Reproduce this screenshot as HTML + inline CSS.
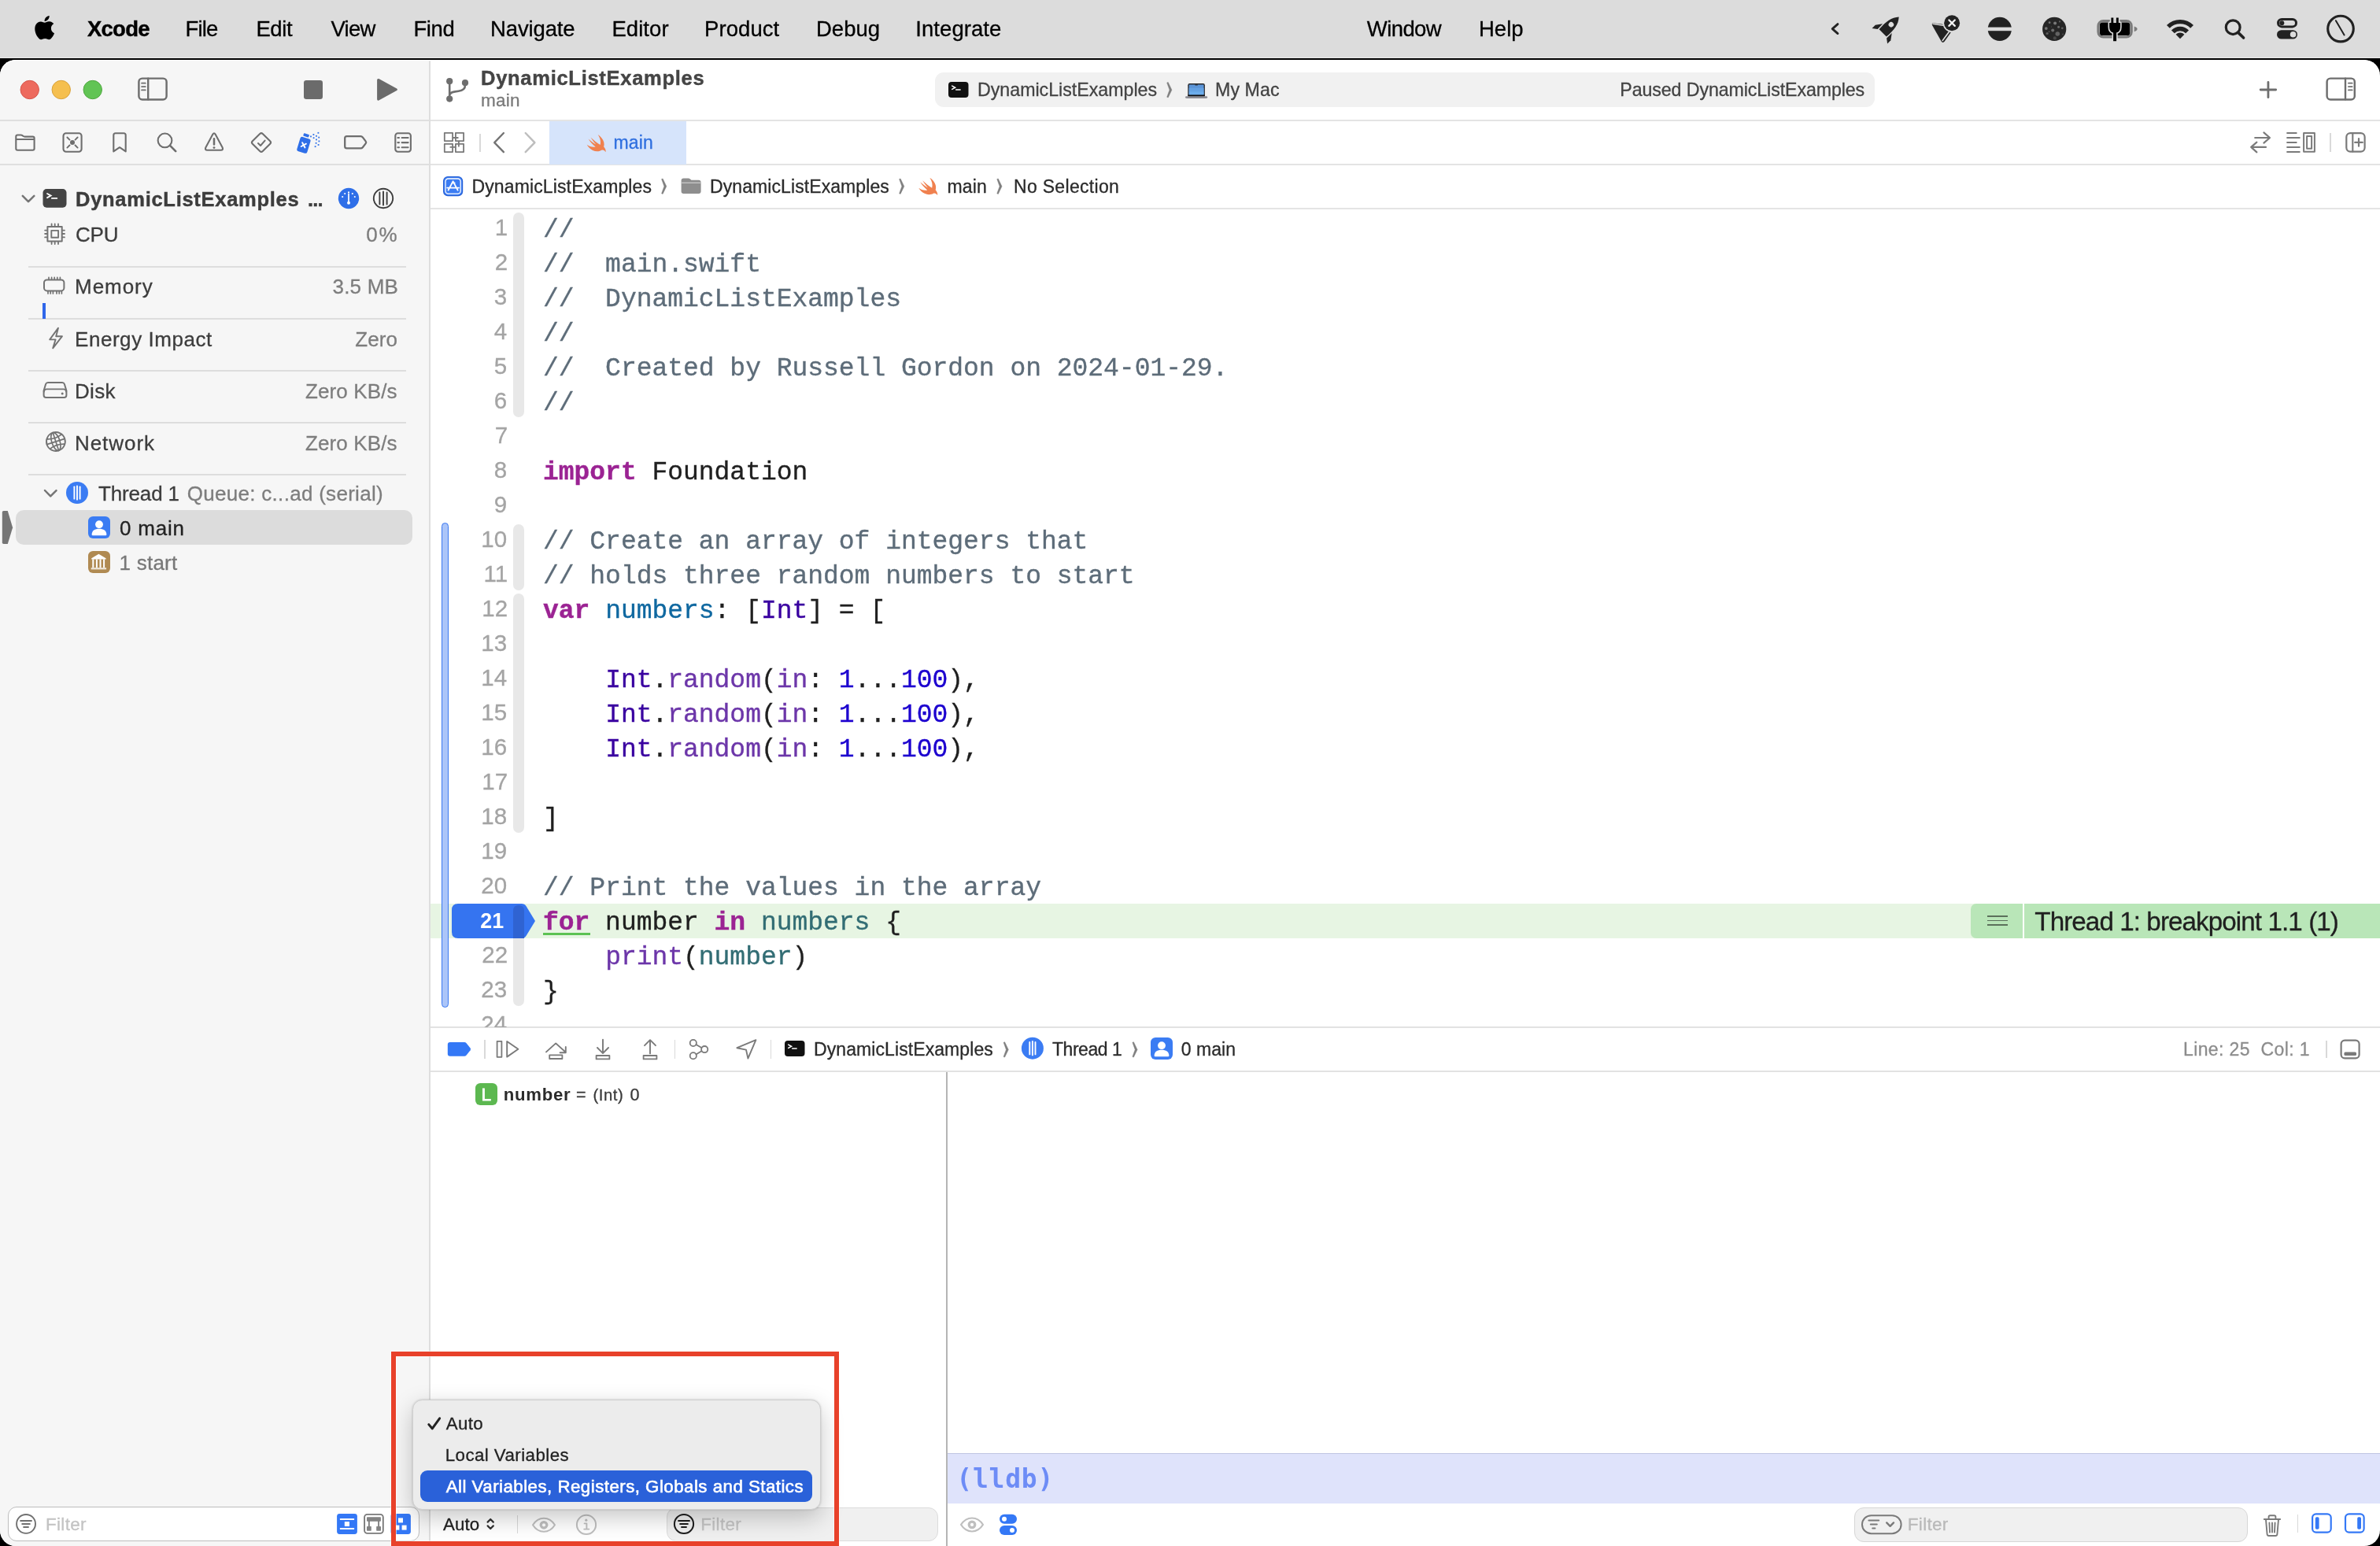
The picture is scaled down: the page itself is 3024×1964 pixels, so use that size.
<!DOCTYPE html><html lang="en"><head><meta charset="utf-8"><title>Xcode - DynamicListExamples</title><style>

*{margin:0;padding:0;box-sizing:border-box}
html,body{width:3024px;height:1964px;overflow:hidden;background:#000}
body{position:relative;font-family:"Liberation Sans",sans-serif}
.t{position:absolute;white-space:pre;line-height:1;font-family:"Liberation Sans",sans-serif;-webkit-text-stroke:.3px}
.t.mono{font-family:"Liberation Mono",monospace}
.t.dv{font-family:"DejaVu Sans Mono",monospace}
.c{color:#5d6c79}.k{color:#9b2393;font-weight:700}.p{color:#1f1f1f}.d{color:#0f68a0}
.ty{color:#3900a0}
.f{color:#6c36a9}.n{color:#1c00cf}.v{color:#326d74}
#win{position:absolute;left:0;top:76px;width:3024px;height:1888px;border-radius:20px;background:#fff;overflow:hidden}
.hl{position:absolute;height:1.5px;background:#e1e1e1}
svg{overflow:visible}
#txt,#code,#poptxt{will-change:transform}
.t.lb{-webkit-text-stroke:.8px}
.t.bd{-webkit-text-stroke:.45px}
.t.hv{-webkit-text-stroke:.6px}

.cl{position:absolute;left:690.0px;white-space:pre;font:33px/37px "Liberation Mono",monospace;letter-spacing:-0.023px;color:#000;-webkit-text-stroke:.35px}
</style></head><body>
<div style="position:absolute;left:0px;top:0px;width:3024px;height:73px;background:#dcdcdc;"></div>
<div style="position:absolute;left:0px;top:73px;width:3024px;height:1.2px;background:#ececec;"></div>
<svg style="position:absolute;left:40.7px;top:19.7px;" width="31.3" height="30.3" viewBox="0 0 24 24"><path d="M12.152 6.896c-.948 0-2.415-1.078-3.96-1.04-2.04.027-3.91 1.183-4.961 3.014-2.117 3.675-.546 9.103 1.519 12.09 1.013 1.454 2.208 3.09 3.792 3.039 1.52-.065 2.09-.987 3.935-.987 1.831 0 2.35.987 3.96.948 1.637-.026 2.676-1.48 3.676-2.948 1.156-1.688 1.636-3.325 1.662-3.415-.039-.013-3.182-1.221-3.22-4.857-.026-3.04 2.48-4.494 2.597-4.559-1.429-2.09-3.623-2.324-4.39-2.376-2-.156-3.675 1.09-4.61 1.09zM15.53 3.83c.843-1.012 1.4-2.427 1.245-3.83-1.207.052-2.662.805-3.532 1.818-.78.896-1.454 2.338-1.273 3.714 1.338.104 2.715-.688 3.559-1.701" fill="#000"/></svg>
<svg style="position:absolute;left:2320px;top:20px;" width="24" height="34" viewBox="0 0 24 34"><path d="M15 10.6L8.2 16.6L15 22.6" fill="none" stroke="#222" stroke-width="2.8" stroke-linecap="round" stroke-linejoin="round"/></svg>
<svg style="position:absolute;left:0;top:0" width="3024" height="74" viewBox="0 0 3024 74"><g transform="translate(2397.5 36.6) rotate(45)"><path d="M0 -21.5C6.2 -14.5 7.6 -6 6.6 7.5H-6.6C-7.6 -6 -6.2 -14.5 0 -21.5Z" fill="#222"/><circle cx="0" cy="-7.6" r="3.3" fill="#dcdcdc"/><path d="M-8.3 -0.6L-13.8 7V13L-8.1 8.6Z" fill="#222"/><path d="M8.3 -0.6L13.8 7V13L8.1 8.6Z" fill="#222"/></g><path d="M2455.6 29.3Q2454.2 30.4 2455 32L2466.6 52.6Q2468.4 55.2 2470.6 52.8L2478.6 41.6L2468 30.8Z" fill="#222"/><path d="M2456 30.2L2468.6 32.3" stroke="#dcdcdc" stroke-width="1.6" stroke-linecap="round" fill="none"/><path d="M2468.2 51.6L2476.6 40.2" stroke="#dcdcdc" stroke-width="1.7" stroke-linecap="round" fill="none"/><circle cx="2480.1" cy="29.2" r="11.6" fill="#dcdcdc"/><circle cx="2480.1" cy="29.2" r="10" fill="#222"/><path d="M2476.4 25.5l7.4 7.4m0-7.4l-7.4 7.4" stroke="#f2f2f2" stroke-width="2.3" stroke-linecap="round"/><circle cx="2540.8" cy="36.9" r="15.1" fill="#222"/><rect x="2524" y="34.6" width="34" height="4.6" fill="#dcdcdc"/><circle cx="2610.2" cy="36.9" r="15.1" fill="#262626"/><circle cx="2604.1" cy="28.7" r="1.4" fill="#8a8a8a" opacity="0.8"/><circle cx="2611.1" cy="29.5" r="2.0" fill="#8a8a8a" opacity="0.85"/><circle cx="2617.1" cy="27.4" r="1.1" fill="#8a8a8a" opacity="0.6"/><circle cx="2599.8" cy="36.1" r="1.9" fill="#8a8a8a" opacity="0.8"/><circle cx="2615.6" cy="34.2" r="1.5" fill="#8a8a8a" opacity="0.7"/><circle cx="2620.3" cy="35.8" r="1.4" fill="#8a8a8a" opacity="0.6"/><circle cx="2608.2" cy="38.4" r="2.0" fill="#8a8a8a" opacity="0.7"/><circle cx="2614.3" cy="43.0" r="2.8" fill="#8a8a8a" opacity="0.6"/><circle cx="2601.1" cy="42.5" r="1.6" fill="#8a8a8a" opacity="0.55"/><circle cx="2603.6" cy="40.3" r="0.8" fill="#8a8a8a" opacity="0.6"/><circle cx="2610.8" cy="48.4" r="2.1" fill="#8a8a8a" opacity="0.35"/><circle cx="2621.1" cy="43.4" r="1.0" fill="#8a8a8a" opacity="0.4"/><circle cx="2606.4" cy="34.0" r="0.6" fill="#8a8a8a" opacity="0.5"/><rect x="2665.9" y="26.4" width="42.4" height="20.6" rx="6.5" fill="none" stroke="#7b7b7b" stroke-width="3"/><rect x="2667.9" y="28.4" width="38.4" height="16.6" rx="3.6" fill="#000"/><path d="M2711.7 33.4Q2715.6 34.6 2715.6 36.8Q2715.6 39 2711.7 40.2Z" fill="#7b7b7b"/><g stroke="#dcdcdc" stroke-width="3.2" stroke-linejoin="round"><path id="plg" d="M2682.4 22.6h2.9v6.4h3.6v-6.4h2.9v6.4h2.3v5.2q0 6-5 7.4v10.6h-4v-10.6q-5-1.4-5-7.4v-5.2h2.3Z" fill="#dcdcdc"/></g><path d="M2682.4 22.6h2.9v6.4h3.6v-6.4h2.9v6.4h2.3v5.2q0 6-5 7.4v10.6h-4v-10.6q-5-1.4-5-7.4v-5.2h2.3Z" fill="#000"/><g fill="none" stroke="#222" stroke-width="5.4"><path d="M2754.9 33.9A21.3 21.3 0 0 1 2785.1 33.9"/><path d="M2760.9 40.4A12.6 12.6 0 0 1 2779.1 40.4"/></g><path d="M2770 49.2L2764.6 43.8A7.6 7.6 0 0 1 2775.4 43.8Z" fill="#222"/><circle cx="2837.2" cy="34.7" r="8.9" fill="none" stroke="#222" stroke-width="3.2"/><path d="M2843.8 41.4L2850.6 48" stroke="#222" stroke-width="3.6" stroke-linecap="round"/><rect x="2894.5" y="24.5" width="23" height="9.4" rx="4.7" fill="none" stroke="#222" stroke-width="3"/><circle cx="2899.3" cy="29.2" r="3" fill="#222"/><rect x="2893" y="38.2" width="26" height="11.4" rx="5.7" fill="#222"/><circle cx="2913.6" cy="43.8" r="3.8" fill="#dcdcdc"/><circle cx="2974" cy="36.6" r="16.3" fill="none" stroke="#222" stroke-width="3.1"/><path d="M2967.9 26.2L2978.6 44.4" stroke="#222" stroke-width="2" stroke-linecap="round"/></svg>
<div id="win"><div style="position:absolute;left:0;top:-76px;width:3024px;height:1964px"><div style="position:absolute;left:0px;top:75.5px;width:545.5px;height:1890px;background:#f6f6f6;"></div>
<div style="position:absolute;left:545px;top:75.5px;width:1.5px;height:1890px;background:#dedede;"></div>
<div style="position:absolute;left:0px;top:152px;width:545px;height:2px;background:#dfdfdf;"></div>
<div style="position:absolute;left:0px;top:208px;width:545px;height:2px;background:#dfdfdf;"></div>
<div style="position:absolute;left:546.5px;top:152px;width:2478px;height:2px;background:#e4e4e4;"></div>
<div style="position:absolute;left:546.5px;top:208px;width:2478px;height:2px;background:#e4e4e4;"></div>
<div style="position:absolute;left:546.5px;top:264px;width:2478px;height:2px;background:#e4e4e4;"></div>
<div style="position:absolute;left:36px;top:338.25px;width:480px;height:2px;background:#dddddd;"></div>
<div style="position:absolute;left:36px;top:404.25px;width:480px;height:2px;background:#dddddd;"></div>
<div style="position:absolute;left:36px;top:470.25px;width:480px;height:2px;background:#dddddd;"></div>
<div style="position:absolute;left:36px;top:536.25px;width:480px;height:2px;background:#dddddd;"></div>
<div style="position:absolute;left:36px;top:602.25px;width:480px;height:2px;background:#dddddd;"></div>
<div style="position:absolute;left:54px;top:384.5px;width:4px;height:20px;background:#2f66ea;"></div>
<div style="position:absolute;left:20px;top:648px;width:504px;height:43.5px;background:#dcdcdc;border-radius:10px"></div>
<div style="position:absolute;left:698px;top:154px;width:174px;height:54.5px;background:#d6e4fb;"></div>
<div style="position:absolute;left:1188px;top:92px;width:1194px;height:44px;background:#f1f1f1;border-radius:11px"></div>
<div style="position:absolute;left:546.5px;top:1148px;width:2478px;height:44px;background:#e7f5e3;"></div>
<div style="position:absolute;left:652px;top:270px;width:14px;height:260px;background:#e8e8e8;border-radius:7px"></div>
<div style="position:absolute;left:652px;top:666px;width:14px;height:84px;background:#e8e8e8;border-radius:7px"></div>
<div style="position:absolute;left:652px;top:754px;width:14px;height:304px;background:#e8e8e8;border-radius:7px"></div>
<div style="position:absolute;left:652px;top:1150px;width:14px;height:128px;background:#e8e8e8;border-radius:7px"></div>
<div style="position:absolute;left:560.5px;top:664px;width:9.5px;height:615.5px;background:#abc5f9;border-radius:5px;border:1.5px solid #3b78f0"></div>
<svg style="position:absolute;left:574px;top:1148px;" width="108" height="44" viewBox="0 0 108 44"><path d="M8 0H88.5Q92.5 0 94.6 3.2L106 22L94.6 40.8Q92.5 44 88.5 44H8Q0 44 0 36V8Q0 0 8 0Z" fill="#3574f0"/><path d="M78 9Q78 2 85 2Q92 2 92 9V44H78Z" fill="#2f63d2"/></svg>
<div style="position:absolute;left:690px;top:1184.5px;width:60px;height:3.5px;background:#5cc253;"></div>
<div style="position:absolute;left:2504px;top:1148px;width:520px;height:44px;background:#b9e6b8;border-radius:7px 0 0 7px"></div>
<div style="position:absolute;left:2569.7px;top:1148px;width:2.5px;height:44px;background:#fff;"></div>
<div style="position:absolute;left:2525px;top:1163px;width:26px;height:1.6px;background:#5b705b;"></div>
<div style="position:absolute;left:2525px;top:1168.6px;width:26px;height:1.6px;background:#5b705b;"></div>
<div style="position:absolute;left:2525px;top:1174.2px;width:26px;height:1.6px;background:#5b705b;"></div>
<div style="position:absolute;left:546.5px;top:1304px;width:2478px;height:2px;background:#e2e2e2;"></div>
<div style="position:absolute;left:546.5px;top:1360.2px;width:2478px;height:2px;background:#e2e2e2;"></div>
<div style="position:absolute;left:1202px;top:1362px;width:2px;height:602px;background:#b5b5b5;"></div>
<div style="position:absolute;left:1204px;top:1846px;width:1820px;height:64px;background:#dfe3fb;border-top:1.5px solid #c0c6e2"></div>
<div style="position:absolute;left:10px;top:1914px;width:523px;height:43.5px;background:#fff;border-radius:11px;border:1.5px solid #bdbdbd"></div>
<div style="position:absolute;left:846.5px;top:1915px;width:345px;height:42.5px;background:#f0f0f0;border-radius:12px;border:1.5px solid #dcdcdc"></div>
<div style="position:absolute;left:2356px;top:1915px;width:500px;height:43.5px;background:#f0f0f0;border-radius:12px;border:1.5px solid #d6d6d6"></div>
<div style="position:absolute;left:609px;top:169.5px;width:1.5px;height:23px;background:#d9d9d9;"></div>
<div style="position:absolute;left:615px;top:1321px;width:1.5px;height:23.5px;background:#d9d9d9;"></div>
<div style="position:absolute;left:856.5px;top:1321px;width:1.5px;height:23.5px;background:#d9d9d9;"></div>
<div style="position:absolute;left:978.5px;top:1321px;width:1.5px;height:23.5px;background:#d9d9d9;"></div>
<div style="position:absolute;left:2955px;top:1322px;width:1.5px;height:22px;background:#d9d9d9;"></div>
<div style="position:absolute;left:2960.3px;top:169.3px;width:1.5px;height:23.6px;background:#d9d9d9;"></div>
<div style="position:absolute;left:656.5px;top:1925px;width:1.5px;height:23px;background:#d9d9d9;"></div>
<div style="position:absolute;left:2918.5px;top:1924px;width:1.5px;height:23px;background:#d9d9d9;"></div>
<svg style="position:absolute;left:0;top:0" width="3024" height="1964" viewBox="0 0 3024 1964"><circle cx="37.75" cy="114" r="11.7" fill="#ed6a5e" stroke="#d6544a" stroke-width="1"/><circle cx="77.75" cy="114" r="11.7" fill="#f5bf4f" stroke="#d9a23c" stroke-width="1"/><circle cx="117.75" cy="114" r="11.7" fill="#61c454" stroke="#4fa73f" stroke-width="1"/><rect x="176.4" y="99.6" width="35.2" height="26.9" rx="4.4" fill="none" stroke="#6e6e6e" stroke-width="2.45" stroke-linecap="round" stroke-linejoin="round" /><path d="M188.2 99.8V126.3" fill="none" stroke="#6e6e6e" stroke-width="2.4" stroke-linecap="round" stroke-linejoin="round" /><path d="M180 105.7h4.8M180 110.1h4.8M180 114.4h4.8" fill="none" stroke="#6e6e6e" stroke-width="1.7" stroke-linecap="round" stroke-linejoin="round" /><rect x="386" y="102" width="24" height="24" rx="3.2" fill="#6b6b6b"/><path d="M480.6 101.4L503.4 113.75L480.6 126.1Z" fill="#6b6b6b" stroke="#6b6b6b" stroke-width="3" stroke-linejoin="round"/><circle cx="571.2" cy="103.2" r="4.1" fill="#6e6e6e"/><circle cx="591" cy="105.2" r="4.1" fill="#6e6e6e"/><circle cx="571.2" cy="125.6" r="4.1" fill="#6e6e6e"/><path d="M571.2 103V125.5M591 105.5V108.2Q591 114.6 582.6 115.8L577 116.6Q571.6 117.6 571.2 121" fill="none" stroke="#6e6e6e" stroke-width="2.6" stroke-linecap="round" stroke-linejoin="round" /><g transform="translate(1205 104) scale(1.0000 1.0000)"><rect width="25.5" height="20" rx="4" fill="#111"/><path d="M4.7 5.1L8.6 7.25L4.7 9.4" fill="none" stroke="#fff" stroke-width="1.55" stroke-linejoin="miter" stroke-linecap="round"/><path d="M9.7 10h5.4" stroke="#fff" stroke-width="1.6" stroke-linecap="round"/></g><path d="M1482.7 105.10L1484.20 104.5L1488.90 114.20L1484.20 123.90L1482.7 123.30L1486.00 114.20Z" fill="#7f7f7f" stroke="#7f7f7f" stroke-width=".5" stroke-linejoin="round"/><rect x="1509.3" y="106" width="21.6" height="16.8" rx="2.2" fill="#2a2a2d"/><rect x="1510.7" y="107.5" width="18.8" height="13" rx=".5" fill="#5c95d8"/><rect x="1510.7" y="111.8" width="18.8" height="4.4" fill="#64a2e3"/><rect x="1510.7" y="116.2" width="18.8" height="4.3" fill="#6cadec"/><rect x="1518.2" y="107.2" width="3.8" height="1.2" rx=".6" fill="#2a2a2d"/><rect x="1509.3" y="120.6" width="21.6" height="2" fill="#0e0e10"/><path d="M1507.4 122.3H1532.8Q1534.2 122.3 1534.2 123.4Q1534.2 125 1532 125H1508.2Q1506 125 1506 123.4Q1506 122.3 1507.4 122.3Z" fill="#8d8d94"/><path d="M2872.2 114h19.5M2881.95 104.3v19.4" fill="none" stroke="#6e6e6e" stroke-width="2.8" stroke-linecap="round" stroke-linejoin="round" /><rect x="2956.6" y="99.6" width="35.2" height="26.9" rx="4.4" fill="none" stroke="#6e6e6e" stroke-width="2.45" stroke-linecap="round" stroke-linejoin="round" /><path d="M2980 99.8V126.3" fill="none" stroke="#6e6e6e" stroke-width="2.4" stroke-linecap="round" stroke-linejoin="round" /><path d="M2983.9 105.7h4.8M2983.9 110.1h4.8M2983.9 114.4h4.8" fill="none" stroke="#6e6e6e" stroke-width="1.7" stroke-linecap="round" stroke-linejoin="round" /><path d="M20.3 174.6V173.5Q20.3 171.5 22.3 171.5H26.6Q27.6 171.5 28.4 172.1L29.6 173Q30.4 173.6 31.4 173.6H41.6Q43.6 173.6 43.6 175.6V188.7Q43.6 190.7 41.6 190.7H22.3Q20.3 190.7 20.3 188.7ZM20.3 177H43.6" fill="none" stroke="#6e6e6e" stroke-width="2.1" stroke-linecap="round" stroke-linejoin="round" /><rect x="80.5" y="169.3" width="23.1" height="23.4" rx="3.4" fill="none" stroke="#6e6e6e" stroke-width="2.1" stroke-linecap="round" stroke-linejoin="round" /><circle cx="92" cy="181" r="3" fill="#6e6e6e"/><path d="M85.4 174.5L88.5 177.6M98.6 174.5L95.5 177.6M85.4 187.6L88.5 184.5M98.6 187.6L95.5 184.5" fill="none" stroke="#6e6e6e" stroke-width="1.9" stroke-linecap="round" stroke-linejoin="round" /><path d="M144.3 171.8Q144.3 169.3 146.8 169.3H157.2Q159.7 169.3 159.7 171.8V192.4L152 187.2L144.3 192.4Z" fill="none" stroke="#6e6e6e" stroke-width="2.1" stroke-linecap="round" stroke-linejoin="round" /><circle cx="209.5" cy="178.4" r="8.85" fill="none" stroke="#6e6e6e" stroke-width="2.1" stroke-linecap="round" stroke-linejoin="round" /><path d="M216 184.9L223.2 192.1" fill="none" stroke="#6e6e6e" stroke-width="2.7" stroke-linecap="round" stroke-linejoin="round" /><path d="M270.4 170.6Q272 168 273.6 170.6L282.7 187.4Q284 190.6 280.6 190.7H263.4Q260 190.6 261.3 187.4Z" fill="none" stroke="#6e6e6e" stroke-width="2.1" stroke-linecap="round" stroke-linejoin="round" /><path d="M272 176.2V183.6" fill="none" stroke="#6e6e6e" stroke-width="2.5" stroke-linecap="round" stroke-linejoin="round" /><circle cx="272" cy="187.6" r="1.45" fill="#6e6e6e"/><path d="M330.2 169.9Q332 168.2 333.8 169.9L343.2 179.2Q345 181 343.2 182.8L333.8 192.1Q332 193.8 330.2 192.1L320.8 182.8Q319 181 320.8 179.2Z" fill="none" stroke="#6e6e6e" stroke-width="2.1" stroke-linecap="round" stroke-linejoin="round" /><path d="M328 182L331 185L336.6 178.6" fill="none" stroke="#6e6e6e" stroke-width="2" stroke-linecap="round" stroke-linejoin="round" /><g transform="translate(394.2 182.6)"><g transform="rotate(17)"><rect x="-14.2" y="-5.4" width="13.6" height="19" rx="2.6" fill="#2f6fe8"/><rect x="-11.6" y="-10.6" width="7.2" height="3.6" rx=".8" fill="#2f6fe8"/><path d="M-10 1.6l5 5m0-5l-5 5" stroke="#fff" stroke-width="1.9" stroke-linecap="round"/></g><rect x="-0.1" y="-10.1" width="1.8" height="1.8" fill="#2f6fe8"/><rect x="3.3" y="-12.5" width="1.8" height="1.8" fill="#2f6fe8"/><rect x="3.5" y="-8.3" width="1.8" height="1.8" fill="#2f6fe8"/><rect x="6.9" y="-10.7" width="1.8" height="1.8" fill="#2f6fe8"/><rect x="6.9" y="-6.1" width="1.8" height="1.8" fill="#2f6fe8"/><rect x="9.3" y="-14.7" width="1.8" height="1.8" fill="#2f6fe8"/><rect x="10.1" y="-8.9" width="1.8" height="1.8" fill="#2f6fe8"/><rect x="10.3" y="-4.1" width="1.8" height="1.8" fill="#2f6fe8"/><rect x="6.5" y="-1.7" width="1.8" height="1.8" fill="#2f6fe8"/><rect x="9.5" y="0.5" width="1.8" height="1.8" fill="#2f6fe8"/><rect x="5.5" y="2.7" width="1.8" height="1.8" fill="#2f6fe8"/></g><path d="M438.2 175.6Q438.2 173.2 440.6 173.2H458.4Q459.8 173.2 460.8 174.4L464.6 179.4Q465.8 180.9 464.6 182.4L460.8 187.2Q459.8 188.4 458.4 188.4H440.6Q438.2 188.4 438.2 186Z" fill="none" stroke="#6e6e6e" stroke-width="2.3" stroke-linecap="round" stroke-linejoin="round" /><rect x="502.3" y="169.3" width="19.6" height="23.4" rx="3.2" fill="none" stroke="#6e6e6e" stroke-width="2.1" stroke-linecap="round" stroke-linejoin="round" /><path d="M510.6 175h8M510.6 181.1h8M510.6 187.2h8M505.4 175h1.6M505.4 181.1h1.6M505.4 187.2h1.6" fill="none" stroke="#6e6e6e" stroke-width="2.1" stroke-linecap="round" stroke-linejoin="round"  stroke-linecap="butt"/><path d="M564.8 168.8h10.3v10.3h-10.3zM578.9 168.8h10.2v10.3h-10.2zM564.8 182.9h10.3v10.2h-10.3zM578.9 182.9h10.2v10.2h-10.2z" fill="none" stroke="#7a7a7a" stroke-width="1.8" stroke-linecap="round" stroke-linejoin="round"  stroke-linejoin="miter"/><path d="M575.5 175H581.8M572.3 186.9H578.4M582.9 179.6V185.8" fill="none" stroke="#7a7a7a" stroke-width="1.8" stroke-linecap="round" stroke-linejoin="round"  stroke-linecap="butt"/><path d="M639.9 169L628.2 181.1L639.9 193.2" fill="none" stroke="#757575" stroke-width="2.4" stroke-linecap="round" stroke-linejoin="round" /><path d="M667.7 169L679.4 181.1L667.7 193.2" fill="none" stroke="#bdbdbd" stroke-width="2.4" stroke-linecap="round" stroke-linejoin="round" /><g transform="translate(745.2 170.5) scale(1.1000 1.1000)"><path d="M13.2 0.4C18.6 4 21.6 9.6 19.9 14.4C21.6 16.4 22.6 18.6 22.1 20.6C20.6 18.2 18.6 17.8 17.4 18.5C14.6 20.2 10.6 20.3 7.2 18.6C4.2 17.1 1.8 14.7 0.4 12.1C3.4 14.3 7.2 15.4 10.4 14.6C7 12 4.2 8.6 2.2 5.4C5 8 8.4 10.4 11 11.8C8.8 9.4 6.6 6.4 4.8 3.6C8.2 6.8 12.2 10 15.8 12.2C16.8 8.6 15.8 4.2 13.2 0.4Z" fill="#f0814f"/></g><path d="M2865.2 175H2883.6M2876.4 168.4L2884 175L2876.4 181.6M2879 186.9H2860.6M2867.4 180.6L2860.2 186.9L2867.4 193.4" fill="none" stroke="#7a7a7a" stroke-width="2.15" stroke-linecap="round" stroke-linejoin="round" /><path d="M2906.1 168.9h11.6M2906.1 174.95h15.7M2906.1 180.9h11.6M2906.1 186.9h15.7M2906.1 192.9h15.7" fill="none" stroke="#7a7a7a" stroke-width="2" stroke-linecap="round" stroke-linejoin="round"  stroke-linecap="butt"/><rect x="2927.1" y="169" width="13.8" height="23.7" fill="none" stroke="#7a7a7a" stroke-width="2" stroke-linecap="round" stroke-linejoin="round"  stroke-linejoin="miter"/><rect x="2931.1" y="173" width="6" height="15.8" fill="none" stroke="#7a7a7a" stroke-width="2" stroke-linecap="round" stroke-linejoin="round"  stroke-linejoin="miter"/><rect x="2981.3" y="169.1" width="23.3" height="23.5" rx="5" fill="none" stroke="#7a7a7a" stroke-width="2.2" stroke-linecap="round" stroke-linejoin="round" /><path d="M2989.3 169.3V192.4" fill="none" stroke="#7a7a7a" stroke-width="2.1" stroke-linecap="round" stroke-linejoin="round" /><path d="M2992.2 180.9h9.6M2997 176.1V185.7" fill="none" stroke="#7a7a7a" stroke-width="2.2" stroke-linecap="round" stroke-linejoin="round" /><rect x="563.6" y="224.6" width="24" height="24" rx="5.4" fill="#3b7cf3" stroke="#2a63d6" stroke-width="1.2"/><rect x="566" y="227" width="19.2" height="19.2" rx="3.6" fill="none" stroke="#fff" stroke-width="1.3"/><path d="M575.6 230.4L569.6 241.6M575.6 230.4L581.6 241.6M568.2 238.6H583M574.4 232.4L577.6 232.4" fill="none" stroke="#fff" stroke-width="1.9" stroke-linecap="round"/><path d="M840.6 227.60L842.10 227L846.80 236.70L842.10 246.40L840.6 245.80L843.90 236.70Z" fill="#7f7f7f" stroke="#7f7f7f" stroke-width=".5" stroke-linejoin="round"/><path d="M1142.6 227.60L1144.10 227L1148.80 236.70L1144.10 246.40L1142.6 245.80L1145.90 236.70Z" fill="#7f7f7f" stroke="#7f7f7f" stroke-width=".5" stroke-linejoin="round"/><path d="M1266.8 227.60L1268.30 227L1273.00 236.70L1268.30 246.40L1266.8 245.80L1270.10 236.70Z" fill="#7f7f7f" stroke="#7f7f7f" stroke-width=".5" stroke-linejoin="round"/><path d="M865.6 229.4Q865.6 226.4 868.6 226.4H874.6Q876 226.4 877 227.4L878.4 228.8H887.6Q890.6 228.8 890.6 231.8V243Q890.6 246 887.6 246H868.6Q865.6 246 865.6 243Z" fill="#8e8e8e"/><rect x="865.6" y="231.6" width="25" height="1.3" fill="#c9c9c9"/><g transform="translate(1166.8 225.4) scale(1.1000 1.1000)"><path d="M13.2 0.4C18.6 4 21.6 9.6 19.9 14.4C21.6 16.4 22.6 18.6 22.1 20.6C20.6 18.2 18.6 17.8 17.4 18.5C14.6 20.2 10.6 20.3 7.2 18.6C4.2 17.1 1.8 14.7 0.4 12.1C3.4 14.3 7.2 15.4 10.4 14.6C7 12 4.2 8.6 2.2 5.4C5 8 8.4 10.4 11 11.8C8.8 9.4 6.6 6.4 4.8 3.6C8.2 6.8 12.2 10 15.8 12.2C16.8 8.6 15.8 4.2 13.2 0.4Z" fill="#f0814f"/></g><path d="M28.8 248.8L36 256.2L43.3 248.9" fill="none" stroke="#757575" stroke-width="2.5" stroke-linecap="round" stroke-linejoin="round" /><g transform="translate(54.5 240) scale(1.1765 1.1875)"><rect width="25.5" height="20" rx="4" fill="#444"/><path d="M4.7 5.1L8.6 7.25L4.7 9.4" fill="none" stroke="#fff" stroke-width="1.55" stroke-linejoin="miter" stroke-linecap="round"/><path d="M9.7 10h5.4" stroke="#fff" stroke-width="1.6" stroke-linecap="round"/></g><circle cx="443" cy="252" r="13.2" fill="#2f6fe8"/><path d="M443 246.4V257" stroke="#fff" stroke-width="1.7" stroke-linecap="round"/><circle cx="443" cy="257.8" r="2" fill="#fff"/><circle cx="435.20" cy="250.07" r="1.05" fill="#fff"/><circle cx="438.18" cy="245.97" r="1.05" fill="#fff"/><circle cx="443.00" cy="244.40" r="1.05" fill="#fff"/><circle cx="447.82" cy="245.97" r="1.05" fill="#fff"/><circle cx="450.80" cy="250.07" r="1.05" fill="#fff"/><circle cx="487" cy="252" r="12.2" fill="none" stroke="#3d3d3d" stroke-width="1.9" stroke-linecap="round" stroke-linejoin="round" /><path d="M482.4 244.4V259.6M487 243.4V260.6M491.6 244.4V259.6" fill="none" stroke="#3d3d3d" stroke-width="1.9" stroke-linecap="round" stroke-linejoin="round" /><rect x="60.4" y="288" width="18.3" height="18.6" fill="none" stroke="#737373" stroke-width="2" stroke-linecap="round" stroke-linejoin="round"  stroke-linejoin="miter"/><rect x="65.3" y="292.9" width="8.8" height="8.8" fill="none" stroke="#737373" stroke-width="1.9" stroke-linecap="round" stroke-linejoin="round"  stroke-linejoin="miter"/><path d="M65.6 284.5V287.2M69.7 284.5V287.2M74 284.5V287.2M65.6 307.4V310.1M69.7 307.4V310.1M74 307.4V310.1M57.1 292.6H59.6M57.1 297H59.6M57.1 301.4H59.6M79.5 292.6H82M79.5 297H82M79.5 301.4H82" fill="none" stroke="#737373" stroke-width="1.8" stroke-linecap="round" stroke-linejoin="round"  stroke-linecap="butt"/><rect x="56" y="355.4" width="25.4" height="14" rx="3.6" fill="none" stroke="#737373" stroke-width="2" stroke-linecap="round" stroke-linejoin="round" /><path d="M62 352.4V355M65.6 352.4V355M69.2 352.4V355M72.8 352.4V355M76.4 352.4V355M61 369.8V373M64.2 369.8V373M67.4 369.8V373M72 369.8V373M75.2 369.8V373M78.4 369.8V373" fill="none" stroke="#737373" stroke-width="1.7" stroke-linecap="round" stroke-linejoin="round" /><path d="M74 416.6L63.2 431.4H70.6L67.2 442.4L79 427.2H71.2Z" fill="none" stroke="#737373" stroke-width="1.9" stroke-linecap="round" stroke-linejoin="round" /><path d="M61 486H79Q81.2 486 81.9 488L84.4 496.4V502Q84.4 505 81.4 505H58.6Q55.6 505 55.6 502V496.4L58.1 488Q58.8 486 61 486Z" fill="none" stroke="#737373" stroke-width="2" stroke-linecap="round" stroke-linejoin="round" /><path d="M55.8 497.6Q56.2 494.4 59.4 494.4H80.6Q83.8 494.4 84.2 497.6" fill="none" stroke="#737373" stroke-width="1.9" stroke-linecap="round" stroke-linejoin="round" /><circle cx="79.2" cy="500" r="1.5" fill="#737373"/><g transform="rotate(-18 70.9 561)"><circle cx="70.9" cy="561" r="11.9" fill="none" stroke="#737373" stroke-width="1.9" stroke-linecap="round" stroke-linejoin="round" /><ellipse cx="70.9" cy="561" rx="5.2" ry="11.9" fill="none" stroke="#737373" stroke-width="1.7" stroke-linecap="round" stroke-linejoin="round" /><path d="M59 561H82.8M70.9 549.1V572.9M61.2 554.6Q70.9 558.2 80.6 554.6M61.2 567.4Q70.9 563.8 80.6 567.4" fill="none" stroke="#737373" stroke-width="1.7" stroke-linecap="round" stroke-linejoin="round" /></g><path d="M57 623L64.2 630.4L71.5 623.1" fill="none" stroke="#757575" stroke-width="2.5" stroke-linecap="round" stroke-linejoin="round" /><circle cx="98" cy="626" r="14" fill="#3b7cf3"/><rect x="93.45" y="617.41" width="1.9" height="17.18" rx="0.9" fill="#fff"/><rect x="97.05" y="616.40" width="1.9" height="19.20" rx="0.9" fill="#fff"/><rect x="100.65" y="617.41" width="1.9" height="17.18" rx="0.9" fill="#fff"/><g transform="translate(112 656) scale(1.0000)"><rect width="28" height="28" rx="6.2" fill="#3b7cf3"/><circle cx="14" cy="10.2" r="4.9" fill="#fff"/><path d="M4.6 23.2C4.6 18.2 8.6 15.8 14 15.8C19.4 15.8 23.4 18.2 23.4 23.2Q23.4 24.2 22.2 24.2H5.8Q4.6 24.2 4.6 23.2Z" fill="#fff"/></g><rect x="112" y="700" width="28" height="28" rx="6.2" fill="#b08a52"/><path d="M125.4 703.8L134.6 709.2V710.4H116.2V709.2Z" fill="#fff"/><rect x="115.7" y="721.2" width="19.4" height="2.2" fill="#fff" opacity=".8"/><rect x="117.3" y="710.4" width="2" height="10.8" fill="#fff"/><rect x="121.9" y="710.4" width="2" height="10.8" fill="#fff"/><rect x="126.5" y="710.4" width="2" height="10.8" fill="#fff"/><rect x="131.1" y="710.4" width="2" height="10.8" fill="#fff"/><path d="M4.6 649H9.8L16.1 670.3L9.8 691H4.6Q2.8 691 2.8 689.2V650.8Q2.8 649 4.6 649Z" fill="#757575"/><path d="M571.8 1324H590Q591.6 1324 592.6 1325.2L597.6 1331.6Q598.4 1332.9 597.6 1334.2L592.6 1340.6Q591.6 1341.8 590 1341.8H571.8Q568.8 1341.8 568.8 1338.8V1327Q568.8 1324 571.8 1324Z" fill="#3478f6"/><rect x="631.6" y="1322.8" width="5.8" height="20" fill="none" stroke="#7a7a7a" stroke-width="1.8" stroke-linecap="round" stroke-linejoin="round"  stroke-linejoin="miter"/><path d="M644.2 1323L658.4 1332.8L644.2 1342.6Z" fill="none" stroke="#7a7a7a" stroke-width="1.9" stroke-linecap="round" stroke-linejoin="round" /><path d="M694 1336.4L706.2 1325.4L718.2 1336.2M711.6 1337.2H718.8V1330" fill="none" stroke="#7a7a7a" stroke-width="1.9" stroke-linecap="round" stroke-linejoin="round" /><rect x="698.2" y="1340.4" width="16.2" height="4.6" fill="none" stroke="#7a7a7a" stroke-width="1.8" stroke-linecap="round" stroke-linejoin="round"  stroke-linejoin="miter"/><path d="M766 1320.8V1338M759 1331L766 1338L773 1331" fill="none" stroke="#7a7a7a" stroke-width="1.9" stroke-linecap="round" stroke-linejoin="round" /><rect x="757.6" y="1341" width="16.8" height="4.4" fill="none" stroke="#7a7a7a" stroke-width="1.8" stroke-linecap="round" stroke-linejoin="round"  stroke-linejoin="miter"/><path d="M826 1338.4V1321.2M819 1328.2L826 1321.2L833 1328.2" fill="none" stroke="#7a7a7a" stroke-width="1.9" stroke-linecap="round" stroke-linejoin="round" /><rect x="817.6" y="1341" width="16.8" height="4.4" fill="none" stroke="#7a7a7a" stroke-width="1.8" stroke-linecap="round" stroke-linejoin="round"  stroke-linejoin="miter"/><path d="M884.4 1327L891.4 1331M884.4 1339.4L891.4 1335.2" fill="none" stroke="#7a7a7a" stroke-width="1.8" stroke-linecap="round" stroke-linejoin="round" /><circle cx="880.8" cy="1325" r="4.1" fill="none" stroke="#7a7a7a" stroke-width="1.8" stroke-linecap="round" stroke-linejoin="round" /><circle cx="895.2" cy="1333.1" r="4.1" fill="none" stroke="#7a7a7a" stroke-width="1.8" stroke-linecap="round" stroke-linejoin="round" /><circle cx="880.8" cy="1341.3" r="4.1" fill="none" stroke="#7a7a7a" stroke-width="1.8" stroke-linecap="round" stroke-linejoin="round" /><path d="M936.4 1331.2L960.4 1321.2L950.4 1344.6L948 1333.6Z" fill="none" stroke="#7a7a7a" stroke-width="1.9" stroke-linecap="round" stroke-linejoin="round" /><g transform="translate(997 1322) scale(1.0000 1.0000)"><rect width="25.5" height="20" rx="4" fill="#111"/><path d="M4.7 5.1L8.6 7.25L4.7 9.4" fill="none" stroke="#fff" stroke-width="1.55" stroke-linejoin="miter" stroke-linecap="round"/><path d="M9.7 10h5.4" stroke="#fff" stroke-width="1.6" stroke-linecap="round"/></g><path d="M1275.1 1324.30L1276.60 1323.7L1281.30 1333.40L1276.60 1343.10L1275.1 1342.50L1278.40 1333.40Z" fill="#7f7f7f" stroke="#7f7f7f" stroke-width=".5" stroke-linejoin="round"/><path d="M1438.9 1324.30L1440.40 1323.7L1445.10 1333.40L1440.40 1343.10L1438.9 1342.50L1442.20 1333.40Z" fill="#7f7f7f" stroke="#7f7f7f" stroke-width=".5" stroke-linejoin="round"/><circle cx="1311.9" cy="1331.7" r="14" fill="#3b7cf3"/><rect x="1307.35" y="1323.11" width="1.9" height="17.18" rx="0.9" fill="#fff"/><rect x="1310.95" y="1322.10" width="1.9" height="19.20" rx="0.9" fill="#fff"/><rect x="1314.55" y="1323.11" width="1.9" height="17.18" rx="0.9" fill="#fff"/><g transform="translate(1462 1318) scale(1.0000)"><rect width="28" height="28" rx="6.2" fill="#3b7cf3"/><circle cx="14" cy="10.2" r="4.9" fill="#fff"/><path d="M4.6 23.2C4.6 18.2 8.6 15.8 14 15.8C19.4 15.8 23.4 18.2 23.4 23.2Q23.4 24.2 22.2 24.2H5.8Q4.6 24.2 4.6 23.2Z" fill="#fff"/></g><rect x="2974.6" y="1321.7" width="23" height="22.6" rx="4.6" fill="none" stroke="#7a7a7a" stroke-width="2.2" stroke-linecap="round" stroke-linejoin="round" /><rect x="2978.4" y="1336.4" width="15.6" height="4.6" rx="1.6" fill="#7a7a7a"/><rect x="604" y="1376" width="28" height="28" rx="6.2" fill="#5cb850"/><circle cx="33.05" cy="1935.9" r="11.95" fill="none" stroke="#707070" stroke-width="1.9" stroke-linecap="round" stroke-linejoin="round" /><path d="M26.10 1932.00h13.9M28.20 1935.95h9.7M30.10 1940.00h5.9" fill="none" stroke="#707070" stroke-width="1.9" stroke-linecap="round" stroke-linejoin="round"  stroke-linecap="butt"/><rect x="428.1" y="1922.9" width="25.8" height="26" rx="3.4" fill="#3478f6"/><rect x="431.9" y="1928.9" width="18.2" height="2.2" rx=".6" fill="#fff"/><rect x="431.9" y="1940.9" width="18.2" height="2.2" rx=".6" fill="#fff"/><rect x="437.8" y="1933" width="6.2" height="6" rx=".5" fill="#fff"/><rect x="463.1" y="1923.9" width="23.7" height="24" rx="3.6" fill="none" stroke="#787878" stroke-width="1.85" stroke-linecap="round" stroke-linejoin="round" /><rect x="466" y="1927.3" width="17.9" height="5.4" rx=".6" fill="#838383"/><rect x="468" y="1932" width="1.8" height="7.6" fill="#7c7c7c"/><rect x="480.2" y="1932" width="1.8" height="7.6" fill="#7c7c7c"/><rect x="466" y="1939" width="5.8" height="5.7" rx=".6" fill="#838383"/><rect x="478.2" y="1939" width="5.8" height="5.7" rx=".6" fill="#838383"/><rect x="496.1" y="1922.9" width="25.8" height="26" rx="3.4" fill="#3478f6"/><rect x="506" y="1928.4" width="6" height="6" fill="#fff"/><rect x="501.4" y="1937.6" width="6" height="6" fill="#fff"/><rect x="510.6" y="1937.6" width="6" height="6" fill="#fff"/><path d="M619.6 1933.6L623.2 1930L626.8 1933.6M619.6 1938.4L623.2 1942L626.8 1938.4" fill="none" stroke="#333" stroke-width="2.2" stroke-linecap="round" stroke-linejoin="round" /><g transform="translate(676 1927.8)"><path d="M1 9.5C5 3.2 10 1 15 1C20 1 25 3.2 29 9.5C25 15.8 20 18 15 18C10 18 5 15.8 1 9.5Z" fill="none" stroke="#bfbfbf" stroke-width="2" stroke-linecap="round" stroke-linejoin="round" /><circle cx="15" cy="9.5" r="5.4" fill="#bfbfbf"/><circle cx="15" cy="9.5" r="2.1" fill="#fff"/></g><circle cx="745" cy="1936.9" r="12.1" fill="none" stroke="#bfbfbf" stroke-width="2" stroke-linecap="round" stroke-linejoin="round" /><circle cx="744.8" cy="1931.2" r="1.6" fill="#bfbfbf"/><path d="M742.6 1935.4H745.4V1942.4M742.2 1942.6H748.4" fill="none" stroke="#bfbfbf" stroke-width="1.9" stroke-linecap="round" stroke-linejoin="round" /><circle cx="869" cy="1936" r="12.1" fill="none" stroke="#1c1c1c" stroke-width="2" stroke-linecap="round" stroke-linejoin="round" /><path d="M862.05 1932.10h13.9M864.15 1936.05h9.7M866.05 1940.10h5.9" fill="none" stroke="#1c1c1c" stroke-width="2" stroke-linecap="round" stroke-linejoin="round"  stroke-linecap="butt"/><g transform="translate(1220 1927.4)"><path d="M1 9.5C5 3.2 10 1 15 1C20 1 25 3.2 29 9.5C25 15.8 20 18 15 18C10 18 5 15.8 1 9.5Z" fill="none" stroke="#bfbfbf" stroke-width="2" stroke-linecap="round" stroke-linejoin="round" /><circle cx="15" cy="9.5" r="5.4" fill="#bfbfbf"/><circle cx="15" cy="9.5" r="2.1" fill="#fff"/></g><rect x="1270" y="1923.8" width="22" height="12" rx="6" fill="#3478f6"/><circle cx="1276" cy="1929.8" r="3" fill="#fff"/><rect x="1270" y="1938" width="22" height="12" rx="6" fill="#3478f6"/><circle cx="1286" cy="1944" r="3" fill="#fff"/><rect x="2366" y="1925.2" width="49.6" height="23" rx="11.5" fill="none" stroke="#7a7a7a" stroke-width="2" stroke-linecap="round" stroke-linejoin="round" /><path d="M2374.4 1931.6H2387.2M2376.8 1936.6H2384.8M2379.2 1941.6H2382.4" fill="none" stroke="#7a7a7a" stroke-width="2" stroke-linecap="round" stroke-linejoin="round" /><path d="M2397.2 1934.4L2401.6 1938.8L2406 1934.4" fill="none" stroke="#7a7a7a" stroke-width="2.4" stroke-linecap="round" stroke-linejoin="round" /><path d="M2876.8 1930H2897.2M2882.6 1929.6V1927Q2882.6 1925.2 2884.4 1925.2H2889.6Q2891.4 1925.2 2891.4 1927V1929.6M2879 1930.4L2880.6 1949Q2880.8 1951 2882.8 1951H2891.2Q2893.2 1951 2893.4 1949L2895 1930.4M2883.4 1934.4L2884 1946.6M2887 1934.4V1946.6M2890.6 1934.4L2890 1946.6" fill="none" stroke="#7a7a7a" stroke-width="1.9" stroke-linecap="round" stroke-linejoin="round" /><rect x="2938.1" y="1923.4" width="23.6" height="23.2" rx="4.6" fill="none" stroke="#3478f6" stroke-width="2.2" stroke-linecap="round" stroke-linejoin="round" /><rect x="2941.8" y="1927.2" width="4.8" height="15.6" rx="1.8" fill="#3478f6"/><rect x="2980" y="1923.4" width="23.6" height="23.2" rx="4.6" fill="none" stroke="#3478f6" stroke-width="2.2" stroke-linecap="round" stroke-linejoin="round" /><rect x="2995.2" y="1927.2" width="4.8" height="15.6" rx="1.8" fill="#3478f6"/></svg>
<div id="code" style="position:absolute;left:0;top:0;width:3024px;height:1304.5px;overflow:hidden"><div class="cl" style="top:274.00px"><span class="c">//</span></div>
<div class="cl" style="top:318.00px"><span class="c">//  main.swift</span></div>
<div class="cl" style="top:362.00px"><span class="c">//  DynamicListExamples</span></div>
<div class="cl" style="top:406.00px"><span class="c">//</span></div>
<div class="cl" style="top:450.00px"><span class="c">//  Created by Russell Gordon on 2024-01-29.</span></div>
<div class="cl" style="top:494.00px"><span class="c">//</span></div>
<div class="cl" style="top:582.00px"><span class="k">import</span><span class="p"> Foundation</span></div>
<div class="cl" style="top:670.00px"><span class="c">// Create an array of integers that</span></div>
<div class="cl" style="top:714.00px"><span class="c">// holds three random numbers to start</span></div>
<div class="cl" style="top:758.00px"><span class="k">var</span><span class="p"> </span><span class="d">numbers</span><span class="p">: [</span><span class="ty">Int</span><span class="p">] = [</span></div>
<div class="cl" style="top:846.00px"><span class="p">    </span><span class="ty">Int</span><span class="p">.</span><span class="f">random</span><span class="p">(</span><span class="f">in</span><span class="p">: </span><span class="n">1</span><span class="p">...</span><span class="n">100</span><span class="p">),</span></div>
<div class="cl" style="top:890.00px"><span class="p">    </span><span class="ty">Int</span><span class="p">.</span><span class="f">random</span><span class="p">(</span><span class="f">in</span><span class="p">: </span><span class="n">1</span><span class="p">...</span><span class="n">100</span><span class="p">),</span></div>
<div class="cl" style="top:934.00px"><span class="p">    </span><span class="ty">Int</span><span class="p">.</span><span class="f">random</span><span class="p">(</span><span class="f">in</span><span class="p">: </span><span class="n">1</span><span class="p">...</span><span class="n">100</span><span class="p">),</span></div>
<div class="cl" style="top:1022.00px"><span class="p">]</span></div>
<div class="cl" style="top:1110.00px"><span class="c">// Print the values in the array</span></div>
<div class="cl" style="top:1154.00px"><span class="k">for</span><span class="p"> number </span><span class="k">in</span><span class="p"> </span><span class="v">numbers</span><span class="p"> {</span></div>
<div class="cl" style="top:1198.00px"><span class="p">    </span><span class="f">print</span><span class="p">(</span><span class="v">number</span><span class="p">)</span></div>
<div class="cl" style="top:1242.00px"><span class="p">}</span></div><span class="t" style="left:628.70px;top:272px;font-size:29.5px;line-height:33px;color:#a4a4a4;">1</span>
<span class="t" style="left:628.70px;top:316px;font-size:29.5px;line-height:33px;color:#a4a4a4;">2</span>
<span class="t" style="left:627.70px;top:360px;font-size:29.5px;line-height:33px;color:#a4a4a4;">3</span>
<span class="t" style="left:627.70px;top:404px;font-size:29.5px;line-height:33px;color:#a4a4a4;">4</span>
<span class="t" style="left:627.70px;top:448px;font-size:29.5px;line-height:33px;color:#a4a4a4;">5</span>
<span class="t" style="left:627.70px;top:492px;font-size:29.5px;line-height:33px;color:#a4a4a4;">6</span>
<span class="t" style="left:628.70px;top:536px;font-size:29.5px;line-height:33px;color:#a4a4a4;">7</span>
<span class="t" style="left:627.70px;top:580px;font-size:29.5px;line-height:33px;color:#a4a4a4;">8</span>
<span class="t" style="left:627.70px;top:624px;font-size:29.5px;line-height:33px;color:#a4a4a4;">9</span>
<span class="t" style="left:611.29px;top:668px;font-size:29.5px;line-height:33px;color:#a4a4a4;">10</span>
<span class="t" style="left:614.48px;top:712px;font-size:29.5px;line-height:33px;color:#a4a4a4;">11</span>
<span class="t" style="left:612.29px;top:756px;font-size:29.5px;line-height:33px;color:#a4a4a4;">12</span>
<span class="t" style="left:611.29px;top:800px;font-size:29.5px;line-height:33px;color:#a4a4a4;">13</span>
<span class="t" style="left:611.29px;top:844px;font-size:29.5px;line-height:33px;color:#a4a4a4;">14</span>
<span class="t" style="left:611.29px;top:888px;font-size:29.5px;line-height:33px;color:#a4a4a4;">15</span>
<span class="t" style="left:611.29px;top:932px;font-size:29.5px;line-height:33px;color:#a4a4a4;">16</span>
<span class="t" style="left:612.29px;top:976px;font-size:29.5px;line-height:33px;color:#a4a4a4;">17</span>
<span class="t" style="left:611.29px;top:1020px;font-size:29.5px;line-height:33px;color:#a4a4a4;">18</span>
<span class="t" style="left:611.29px;top:1064px;font-size:29.5px;line-height:33px;color:#a4a4a4;">19</span>
<span class="t" style="left:611.29px;top:1108px;font-size:29.5px;line-height:33px;color:#a4a4a4;">20</span>
<span class="t" style="left:610.30px;top:1155px;font-size:26.8px;line-height:30px;color:#fff;font-weight:700;-webkit-text-stroke:0;">21</span>
<span class="t" style="left:612.29px;top:1196px;font-size:29.5px;line-height:33px;color:#a4a4a4;">22</span>
<span class="t" style="left:611.29px;top:1240px;font-size:29.5px;line-height:33px;color:#a4a4a4;">23</span>
<span class="t" style="left:611.29px;top:1284px;font-size:29.5px;line-height:33px;color:#a4a4a4;">24</span></div>
</div><div style="position:absolute;left:0;top:0;right:0;bottom:0;border-radius:20px;box-shadow:inset 0 1.2px 0 #fff"></div></div>
<div id="txt"><span class="t bd" style="left:110.90px;top:21px;font-size:27.5px;line-height:31px;color:#000;font-weight:700;letter-spacing:-0.708px;">Xcode</span>
<span class="t" style="left:235.60px;top:21px;font-size:27.5px;line-height:31px;color:#000;letter-spacing:-0.872px;">File</span>
<span class="t" style="left:325.40px;top:21px;font-size:27.5px;line-height:31px;color:#000;letter-spacing:-0.382px;">Edit</span>
<span class="t" style="left:420.60px;top:21px;font-size:27.5px;line-height:31px;color:#000;letter-spacing:-0.816px;">View</span>
<span class="t" style="left:525.40px;top:21px;font-size:27.5px;line-height:31px;color:#000;letter-spacing:-0.367px;">Find</span>
<span class="t" style="left:623.00px;top:21px;font-size:27.5px;line-height:31px;color:#000;letter-spacing:-0.135px;">Navigate</span>
<span class="t" style="left:777.40px;top:21px;font-size:27.5px;line-height:31px;color:#000;letter-spacing:0.064px;">Editor</span>
<span class="t" style="left:895.00px;top:21px;font-size:27.5px;line-height:31px;color:#000;letter-spacing:0.078px;">Product</span>
<span class="t" style="left:1037.00px;top:21px;font-size:27.5px;line-height:31px;color:#000;letter-spacing:0.014px;">Debug</span>
<span class="t" style="left:1163.30px;top:21px;font-size:27.5px;line-height:31px;color:#000;letter-spacing:0.056px;">Integrate</span>
<span class="t" style="left:1736.80px;top:21px;font-size:27.5px;line-height:31px;color:#000;letter-spacing:-0.590px;">Window</span>
<span class="t" style="left:1879.00px;top:21px;font-size:27.5px;line-height:31px;color:#000;letter-spacing:0.012px;">Help</span>
<span class="t bd" style="left:611.00px;top:85px;font-size:25.5px;line-height:28px;color:#454545;font-weight:700;letter-spacing:0.721px;">DynamicListExamples</span>
<span class="t" style="left:611.00px;top:115px;font-size:22.5px;line-height:25px;color:#7a7a7a;letter-spacing:0.248px;">main</span>
<span class="t" style="left:1242.00px;top:101px;font-size:23.2px;line-height:26px;color:#434343;">DynamicListExamples</span>
<span class="t" style="left:1544.00px;top:101px;font-size:23.2px;line-height:26px;color:#434343;letter-spacing:0.087px;">My Mac</span>
<span class="t" style="left:2058.30px;top:101px;font-size:23.2px;line-height:26px;color:#434343;letter-spacing:-0.091px;">Paused DynamicListExamples</span>
<span class="t" style="left:779.50px;top:168px;font-size:23px;line-height:26px;color:#2f6fdf;letter-spacing:0.146px;">main</span>
<span class="t" style="left:599.50px;top:224px;font-size:23px;line-height:26px;color:#2b2b2b;letter-spacing:0.126px;">DynamicListExamples</span>
<span class="t" style="left:902.00px;top:224px;font-size:23px;line-height:26px;color:#2b2b2b;letter-spacing:0.087px;">DynamicListExamples</span>
<span class="t" style="left:1203.50px;top:224px;font-size:23px;line-height:26px;color:#2b2b2b;letter-spacing:0.146px;">main</span>
<span class="t" style="left:1288.00px;top:224px;font-size:23px;line-height:26px;color:#2b2b2b;letter-spacing:0.308px;">No Selection</span>
<span class="t bd" style="left:96.00px;top:239px;font-size:25.5px;line-height:28px;color:#3d3d3d;font-weight:700;letter-spacing:0.721px;">DynamicListExamples</span>
<span class="t bd" style="left:391.00px;top:239px;font-size:25.5px;line-height:28px;color:#3d3d3d;font-weight:700;letter-spacing:-0.835px;">...</span>
<span class="t" style="left:96.00px;top:283px;font-size:26px;line-height:30px;color:#3d3d3d;letter-spacing:-0.184px;">CPU</span>
<span class="t" style="left:465.25px;top:283px;font-size:26px;line-height:30px;color:#7d7d7d;letter-spacing:1.790px;">0%</span>
<span class="t" style="left:95.00px;top:349px;font-size:26px;line-height:30px;color:#3d3d3d;letter-spacing:0.971px;">Memory</span>
<span class="t" style="left:422.50px;top:349px;font-size:26px;line-height:30px;color:#7d7d7d;letter-spacing:0.195px;">3.5 MB</span>
<span class="t" style="left:95.00px;top:416px;font-size:26px;line-height:30px;color:#3d3d3d;letter-spacing:0.550px;">Energy Impact</span>
<span class="t" style="left:451.25px;top:416px;font-size:26px;line-height:30px;color:#7d7d7d;letter-spacing:0.083px;">Zero</span>
<span class="t" style="left:95.00px;top:482px;font-size:26px;line-height:30px;color:#3d3d3d;letter-spacing:0.316px;">Disk</span>
<span class="t" style="left:388.00px;top:482px;font-size:26px;line-height:30px;color:#7d7d7d;letter-spacing:0.114px;">Zero KB/s</span>
<span class="t" style="left:95.00px;top:548px;font-size:26px;line-height:30px;color:#3d3d3d;letter-spacing:0.941px;">Network</span>
<span class="t" style="left:388.00px;top:548px;font-size:26px;line-height:30px;color:#7d7d7d;letter-spacing:0.114px;">Zero KB/s</span>
<span class="t" style="left:125.00px;top:612px;font-size:26px;line-height:30px;color:#3d3d3d;letter-spacing:-0.158px;">Thread 1</span>
<span class="t" style="left:237.75px;top:612px;font-size:26px;line-height:30px;color:#7d7d7d;letter-spacing:0.292px;">Queue: c...ad (serial)</span>
<span class="t" style="left:152.00px;top:656px;font-size:26px;line-height:30px;color:#222;letter-spacing:0.784px;">0 main</span>
<span class="t" style="left:151.50px;top:700px;font-size:26px;line-height:30px;color:#787878;letter-spacing:0.246px;">1 start</span>
<span class="t" style="left:58.00px;top:1924px;font-size:22.5px;line-height:25px;color:#c3c3c3;letter-spacing:0.299px;">Filter</span>
<span class="t" style="left:1034.00px;top:1320px;font-size:23px;line-height:26px;color:#2b2b2b;letter-spacing:0.087px;">DynamicListExamples</span>
<span class="t" style="left:1337.00px;top:1320px;font-size:23px;line-height:26px;color:#2b2b2b;letter-spacing:-0.466px;">Thread 1</span>
<span class="t" style="left:1500.75px;top:1320px;font-size:23px;line-height:26px;color:#2b2b2b;letter-spacing:0.052px;">0 main</span>
<span class="t" style="left:2774.00px;top:1320px;font-size:23px;line-height:26px;color:#8c8c8c;letter-spacing:0.385px;">Line: 25  Col: 1</span>
<span class="t" style="left:639.75px;top:1378px;font-size:22.2px;line-height:25px;color:#2b2b2b;font-weight:700;-webkit-text-stroke:0;letter-spacing:0.705px;">number</span>
<span class="t" style="left:732.00px;top:1379px;font-size:21.5px;line-height:24px;color:#3a3a3a;">=</span>
<span class="t" style="left:753.50px;top:1380px;font-size:20.3px;line-height:22px;color:#3a3a3a;letter-spacing:0.549px;">(Int)</span>
<span class="t" style="left:800.50px;top:1378px;font-size:21.6px;line-height:25px;color:#3a3a3a;">0</span>
<span class="t lb" style="left:611.40px;top:1378px;font-size:22.6px;line-height:25px;color:#fff;">L</span>
<span class="t" style="left:563.00px;top:1924px;font-size:22.3px;line-height:25px;color:#222;letter-spacing:0.111px;">Auto</span>
<span class="t" style="left:890.25px;top:1924px;font-size:22.5px;line-height:25px;color:#c4c4c4;letter-spacing:0.299px;">Filter</span>
<span class="t" style="left:2423.80px;top:1924px;font-size:22.5px;line-height:25px;color:#b9b9b9;letter-spacing:0.299px;">Filter</span>
<span class="t dv" style="left:1215.25px;top:1859px;font-size:33px;line-height:39px;color:#6d8cf6;font-weight:700;-webkit-text-stroke:0;letter-spacing:0.782px;">(lldb)</span>
<span class="t" style="left:2585.30px;top:1152px;font-size:33.2px;line-height:37px;color:#1f1f1f;letter-spacing:-0.920px;">Thread 1: breakpoint 1.1 (1)</span></div>
<div style="position:absolute;left:523.75px;top:1777.5px;width:518.75px;height:140.5px;background:#ececec;border-radius:12.5px;border:1px solid #cfcfcf;box-shadow:0 10px 30px rgba(0,0,0,.22),0 0 3px rgba(0,0,0,.18)"></div>
<div style="position:absolute;left:534.25px;top:1868.25px;width:497.75px;height:39.25px;background:#2a61d9;border-radius:9px"></div>
<svg style="position:absolute;left:543px;top:1800px" width="18" height="17" viewBox="0 0 18 17"><path d="M1.8 9.6L6.2 14.8L15.6 1.8" fill="none" stroke="#222" stroke-width="3" stroke-linecap="round" stroke-linejoin="round"/></svg>
<div id="poptxt"><span class="t" style="left:566.75px;top:1796px;font-size:22.3px;line-height:25px;color:#222;letter-spacing:0.344px;">Auto</span>
<span class="t" style="left:565.75px;top:1836px;font-size:22.3px;line-height:25px;color:#222;letter-spacing:0.436px;">Local Variables</span>
<span class="t hv" style="left:566.75px;top:1876px;font-size:22.3px;line-height:25px;color:#fff;letter-spacing:0.467px;">All Variables, Registers, Globals and Statics</span></div>
<div style="position:absolute;left:497px;top:1717px;width:569px;height:247px;border:6px solid #e8412a;box-shadow:0 0 0 1px rgba(255,255,255,.55),inset 0 0 0 1px rgba(255,255,255,.55)"></div>
</body></html>
